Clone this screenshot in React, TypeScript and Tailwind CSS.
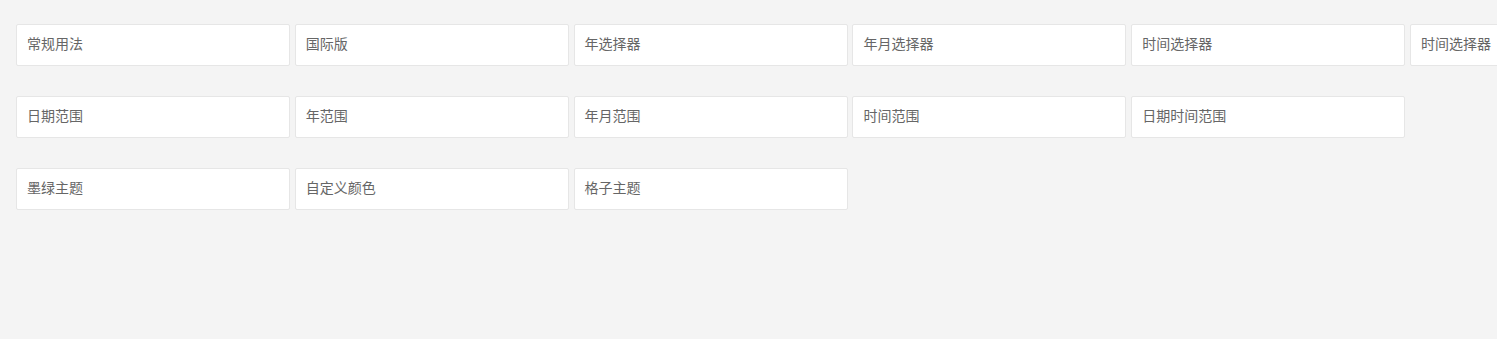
const ROWS: string[][] = [
  ['常规用法', '国际版', '年选择器', '年月选择器', '时间选择器', '时间选择器'],
  ['日期范围', '年范围', '年月范围', '时间范围', '日期时间范围'],
  ['墨绿主题', '自定义颜色', '格子主题'],
];

export default function App() {
  return (
    <div
      className="h-[339px] w-full overflow-hidden bg-[#f4f4f4] pt-[24px]"
      style={{ fontFamily: '"Liberation Sans", "Noto Sans CJK SC", sans-serif' }}
    >
      <div className="flex flex-col gap-[30px]">
        {ROWS.map((row, i) => (
          <div key={i} className="flex flex-nowrap gap-[4.8px] pl-[16px]">
            {row.map((label, j) => (
              <div
                key={j}
                className="flex h-[42px] w-[274px] shrink-0 items-center rounded-[2px] border border-[#e6e6e6] bg-white px-[10px] pb-[2px] text-[14px] text-[#666]"
              >
                {label}
              </div>
            ))}
          </div>
        ))}
      </div>
    </div>
  );
}
